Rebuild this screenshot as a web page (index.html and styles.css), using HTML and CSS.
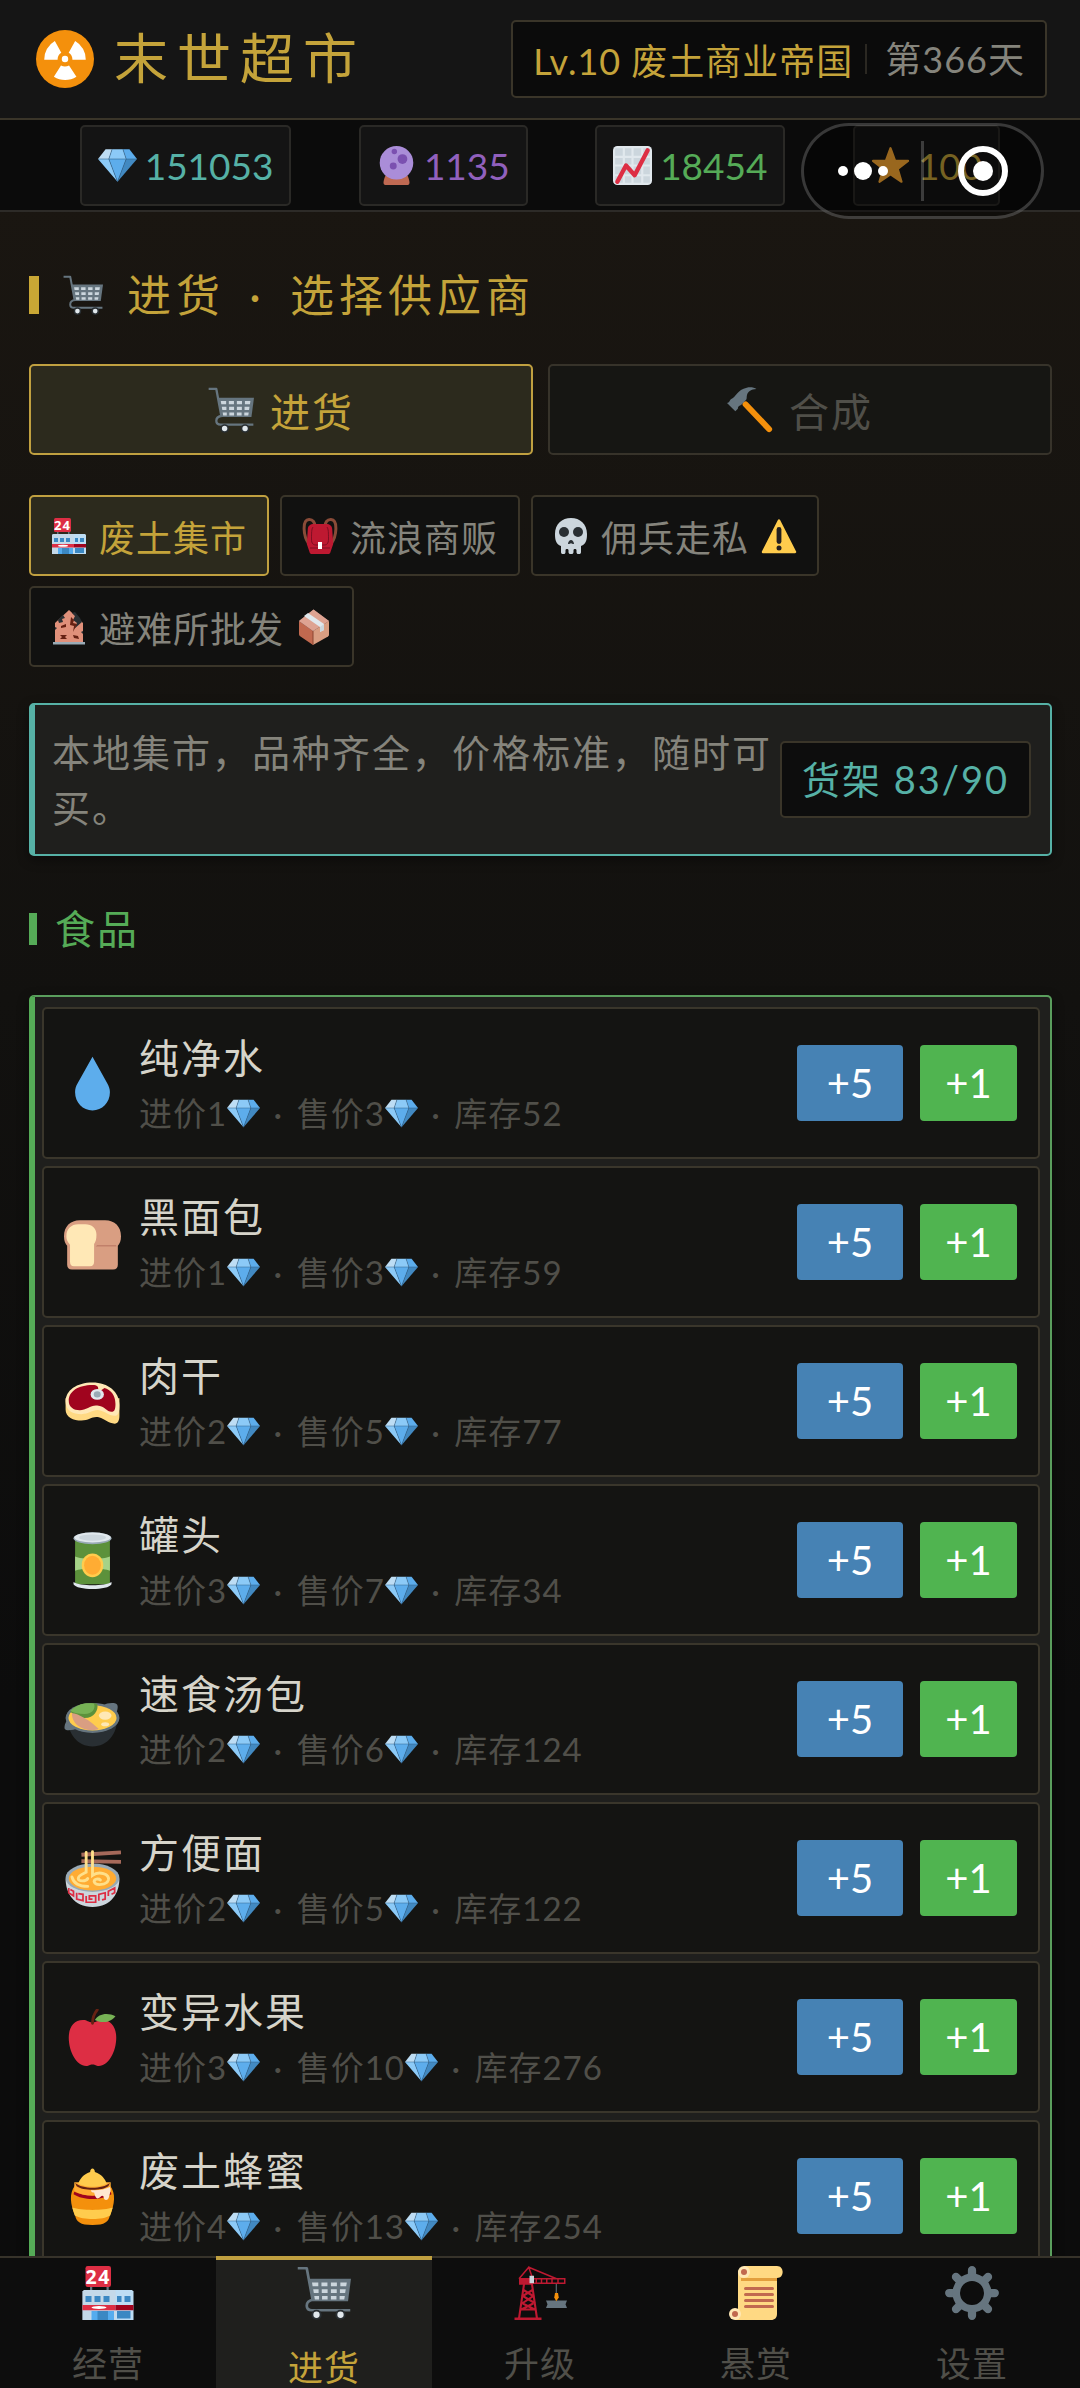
FILE: index.html
```html
<!DOCTYPE html>
<html lang="zh-CN">
<head>
    <meta charset="UTF-8">
    <meta name="viewport" content="width=device-width, initial-scale=1.0">
    <title>末世超市</title>
    <link rel="stylesheet" href="styles.css">
</head>
<body>

<!-- Icon set -->
<svg class="icon-set" aria-hidden="true">
    <symbol id="i-radiation" viewBox="0 0 36 36">
        <circle cx="18" cy="18" r="18" fill="#F4900C"/>
        <circle cx="18" cy="18" r="2" fill="#fff"/>
        <path fill="#fff" d="M13.4 18.5H5.1a12.9 12.9 0 0 1 6.6-11.7l4 7.3a5 5 0 0 0-2.3 4.4zM22.6 18.5h8.3a12.9 12.9 0 0 0-6.6-11.7l-4 7.3a5 5 0 0 1 2.3 4.4zM15.5 22a5 5 0 0 0 5 0l4.6 7a13 13 0 0 1-14 0z"/>
    </symbol>
    <symbol id="i-gem" viewBox="0 0 36 36">
        <path fill="#BDDDF4" d="M13 3H7l-7 9h10z"/>
        <path fill="#5DADEC" d="M36 12l-7-9h-6l3 9z"/>
        <path fill="#4289C1" d="M26 12h10L18 33z"/>
        <path fill="#8CCAF7" d="M10 12H0l18 21zm3-9l-3 9h16l-3-9z"/>
        <path fill="#5DADEC" d="M18 33l-8-21h16z"/>
        <path fill="none" stroke="#2f5d85" stroke-width=".5" d="M0 12h36M13 3l-3 9 8 21 8-21-3-9"/>
    </symbol>
    <symbol id="i-crystal" viewBox="0 0 36 36">
        <path fill="#BF6952" d="M8 27h20c1 2 2 5 2 7 0 1-.6 2-1.600 2H7.600C6.600 36 6 35 6 34c0-2 1-5 2-7z"/>
        <circle cx="18" cy="15.500" r="15.500" fill="#AA8DD8"/>
        <circle cx="16" cy="5" r="2.500" fill="#7B50B0"/>
        <circle cx="23.500" cy="12" r="4.500" fill="#7B50B0"/>
        <circle cx="15" cy="18.500" r="3.200" fill="#7B50B0"/>
    </symbol>
    <symbol id="i-chart" viewBox="0 0 36 36">
        <rect width="36" height="36" rx="4" fill="#E1E8ED"/>
        <path fill="#CCD6DD" d="M2 2h7v7H2zM11 2h6v7h-6zM19 2h7v7h-7zM28 2h6v7h-6zM2 11h7v6H2zM11 11h6v6h-6zM19 11h7v6h-7zM28 11h6v6h-6zM2 19h7v7H2zM11 19h6v7h-6zM19 19h7v7h-7zM28 19h6v7h-6zM2 28h7v6H2zM11 28h6v6h-6zM19 28h7v6h-7zM28 28h6v6h-6z"/>
        <path fill="none" stroke="#DD2E44" stroke-width="4" stroke-linecap="round" stroke-linejoin="round" d="M4 33l8-15 8 9L32 4"/>
    </symbol>
    <symbol id="i-star" viewBox="0 0 36 36">
        <path fill="#FFAC33" stroke="#FFAC33" stroke-width="2" stroke-linejoin="round" d="M18 2l4.200 11.400 12 .4-9.500 7.400L28.200 33 18 26.200 7.800 33l3.500-11.800L1.800 13.800l12-.4z"/>
    </symbol>
    <symbol id="i-cart" viewBox="0 0 36 36">
        <path fill="none" stroke="#66757F" stroke-width="1.800" stroke-linejoin="round" d="M.5 1.500h6L10.500 23M11 22.500c-3 .3-4.500 2-4.500 4s1.500 3 3.500 3h25.500"/>
        <path fill="#66757F" d="M8 8.500h28l-2 15H10.500z"/>
        <path fill="#CCD6DD" d="M10 11h4.200v2.500h-3.800zM16.300 11h4v2.500h-4zM22.600 11h4v2.500h-4zM28.900 11h4.300l-.4 2.500h-3.900zM10.800 15.500h3.600V18h-3.200zM16.500 15.500h3.900V18h-3.900zM22.600 15.500h3.900V18h-3.900zM28.600 15.500h3.900l-.4 2.500h-3.500zM11.500 20h3.200v2.300h-2.800zM16.700 20h3.700v2.300h-3.700zM22.600 20h3.700v2.300h-3.700zM28.400 20h3.500l-.4 2.300h-3.100z"/>
        <circle cx="13" cy="32.500" r="3.400" fill="#292F33"/>
        <circle cx="29" cy="32.500" r="3.400" fill="#292F33"/>
        <circle cx="13" cy="32.500" r="2.100" fill="#E1E8ED"/>
        <circle cx="29" cy="32.500" r="2.100" fill="#E1E8ED"/>
    </symbol>
    <symbol id="i-hammer" viewBox="0 0 36 36">
        <path fill="none" stroke="#F4900C" stroke-width="4.600" stroke-linecap="round" d="M14.500 13.500L33 33"/>
        <path fill="#66757F" d="M0 12.500c2-.5 2-2 3-3C7 8 8 2 15.500.5c3-.6 6 0 7.500 1-4 .2-6.500 2-7.300 4.500-.5 1.700 0 3-.7 4l-4 4c-2 .8-2.500 1.500-2.500 3L6.500 19z"/>
    </symbol>
    <symbol id="i-store" viewBox="0 0 36 36">
        <path fill="#66757F" d="M6 13h1.500v3H6zM17 13h1.500v3H17z"/>
        <rect x="3" y="0" width="17" height="14" rx="1.500" fill="#DD2E44"/>
        <text x="11.500" y="12" text-anchor="middle" class="store-sign">24</text>
        <path fill="#BDDDF4" d="M1 17l1-1h32l1 1v19H1z"/>
        <path fill="#CCD6DD" d="M1 17l1-1h21v20H1z" opacity=".5"/>
        <path fill="#3B88C3" d="M3 20h4v4H3zM9 20h4v4H9zM15 20h4v4h-4zM24 20h3v4h-3zM29 20h4v4h-4zM24 30h9v5h-9z"/>
        <path fill="#DD2E44" d="M1 26h22v3.500H1z"/>
        <path fill="#A0041E" d="M23 26h12v3.500H23z"/>
        <path fill="#55ACEE" d="M7 30h15v6H7z"/>
        <path fill="#3B88C3" d="M11 30h7v6h-7z"/>
        <ellipse cx="12" cy="27.700" rx="5" ry="1" fill="#fff"/>
    </symbol>
    <symbol id="i-backpack" viewBox="0 0 36 36">
        <path fill="none" stroke="#8A4B38" stroke-width="3" d="M7 26C1 18 0 2 7 1.600c4-.2 6 3 6 7M29 26c6-8 7-24 0-24.400-4-.2-6 3-6 7"/>
        <path fill="#BE1931" d="M12 6h12c4 0 6 2 6.200 5l1 15L28.500 34c-.4 1.500-1 2-2.500 2H10c-1.500 0-2.100-.5-2.500-2L4.800 26l1-15C6 8 8 6 12 6z"/>
        <path fill="none" stroke="#7d0f22" stroke-width="1" d="M11 9c-1.500 2-1.500 6-1.500 12 0 5 2 6 4.500 6h8c2.500 0 4.500-1 4.500-6 0-6 0-10-1.500-12M8 30h20"/>
        <rect x="16" y="24" width="4" height="7" fill="#fff"/>
    </symbol>
    <symbol id="i-skull" viewBox="0 0 36 36">
        <path fill="#CCD6DD" d="M34 16C34 6 27 0 18 0S2 6 2 16c0 6 1 10 6 12v6c0 3 4.500 3 4.500 0v-2c0-1.500 3-1.500 3 0v2c0 3 5 3 5 0v-2c0-1.500 3-1.500 3 0v2c0 3 4.500 3 4.500 0v-6c5-2 6-6 6-12z"/>
        <circle cx="11" cy="14" r="5" fill="#292F33"/>
        <circle cx="25" cy="14" r="5" fill="#292F33"/>
        <path fill="#292F33" d="M15 26c0-2 1.500-4 3-4s3 2 3 4c-1 .5-2-.8-3-.8s-2 1.300-3 .8z"/>
    </symbol>
    <symbol id="i-warning" viewBox="0 0 36 36">
        <path fill="#FFCC4D" stroke="#FFCC4D" stroke-width="2.500" stroke-linejoin="round" d="M18 2.500l16 31.500H2z"/>
        <rect x="15.600" y="9" width="4.800" height="17" rx="2.400" fill="#231F20"/>
        <circle cx="18" cy="30" r="2.500" fill="#231F20"/>
    </symbol>
    <symbol id="i-ruin" viewBox="0 0 36 36">
        <path fill="#E0907A" d="M4 33V14L18 1l14 13v19z"/>
        <path fill="#292F33" d="M7 11l5-5 2 3-3 1 1 3-4 1zM21 4l3 3-2 4 4 3-3 6 8-7-2-4-5-6zM4 18l2 1-2 2zM32 22l-2 1 2 2z"/>
        <path fill="#662113" d="M20 8l3 3-1 3 4 1-4 8 1-6-4-1zM10 17l5-2v3l-5 1zM9 26h7l-2 2 2 2H9l2-2zM22 26l5 1 1 3-5-1z"/>
        <path fill="#99AAB5" d="M2 33h32v2.500H2z"/>
    </symbol>
    <symbol id="i-package" viewBox="0 0 36 36">
        <path fill="#C1694F" d="M3 12l14 10v14L4.500 27.500C3.500 27 3 26 3 25z"/>
        <path fill="#D99E82" d="M33 12L17 22v14l15-8.500c.7-.5 1-1 1-2z"/>
        <path fill="#E6AAAA" d="M3 12L17.500.5 33 12 17 22z"/>
        <path fill="#D99E82" d="M3 12L17.500.5 33 12 17 22z" opacity=".6"/>
        <path fill="#E1E8ED" d="M8 7l4-3 16 11v6l-4 2v-5z"/>
        <path fill="#CCD6DD" d="M24 18l4-3v6l-4 2z"/>
        <path fill="none" stroke="#8A4633" stroke-width="1" d="M17 22v14"/>
    </symbol>
    <symbol id="i-water" viewBox="0 0 36 36">
        <path fill="#5DADEC" d="M27.300 17.800L18 1.100 8.700 17.700c-1.200 2.100-1.700 3.600-1.700 5.800C7 30 12 35 18 35s11-5 11-11.500c0-2.200-.6-3.700-1.700-5.700z"/>
    </symbol>
    <symbol id="i-bread" viewBox="0 0 36 36">
        <path fill="#D99E82" d="M36 14c0-6-4-10-10-10H10C4 4 0 8 0 14c0 3 .8 4.500 2 6v12c0 2 1 3 3 3h26c2 0 3-1 3-3V20c1.200-1.500 2-3 2-6z"/>
        <path fill="#FFE8B6" d="M20.500 13c0-4-3-6.500-7-6.500H9c-4.500 0-7.500 3-7.500 7.500 0 3 1.500 4 2.300 5.500V30c0 2 .7 3 2.500 3h10c2 0 2.700-1 2.700-3V19c1-1.500 1.500-3 1.500-6z"/>
        <path fill="#C1806A" d="M21 19.500h12v1H20z"/>
    </symbol>
    <symbol id="i-meat" viewBox="0 0 36 36">
        <path fill="#FFD983" d="M1 16v7c0 5 5 7 10 7s7-3 11-2 6 4 10 4c2 0 3-2 3-5V16z"/>
        <path fill="#FFE8B6" d="M18 6C8 6 1 11 1 18c0 6 5 8 10 8s7-3 11-2.500S28 27 32 27c2.500 0 3-2.500 3-7C35 12 28 6 18 6z"/>
        <path fill="#A0041E" d="M18 7.500c3 0 4 1 3.500 3.500 0 1 2 0 4-1.500 4 1 7 4.500 7 10 0 3-.5 5-2.500 5-3 0-4-3.500-9-4-4-.5-7 3-11 3-4 0-7-2-7-6C3 11.500 9 7.500 18 7.500z"/>
        <ellipse cx="21" cy="13.500" rx="4.200" ry="3.400" fill="#E1E8ED"/>
        <ellipse cx="21" cy="13.500" rx="2.200" ry="1.900" fill="#99AAB5"/>
    </symbol>
    <symbol id="i-can" viewBox="0 0 36 36">
        <path fill="#5C913B" d="M7 5h22v28H7z"/>
        <path fill="#A6D388" d="M7 15.500c4 2 18 2 22 0v9c-4-2-18-2-22 0z"/>
        <ellipse cx="18" cy="4" rx="12" ry="3.800" fill="#99AAB5"/>
        <ellipse cx="18" cy="3.500" rx="11.500" ry="3.200" fill="#E1E8ED"/>
        <ellipse cx="18" cy="3.500" rx="8.500" ry="2" fill="#CCD6DD"/>
        <ellipse cx="18" cy="21" rx="6.800" ry="7.500" fill="#FFCC4D"/>
        <ellipse cx="18" cy="21" rx="5.300" ry="6" fill="#FFAC33"/>
        <path fill="#E1E8ED" d="M6 31.500c4 2.800 20 2.800 24 0v1.500c-2 4-22 4-24 0z"/>
    </symbol>
    <symbol id="i-soup" viewBox="0 0 36 36">
        <path fill="#292F33" d="M2.500 18c0 9 6 17 15.500 17s15.500-8 15.500-17z"/>
        <path fill="#66757F" d="M25 9c2-1.500 7-2 8.500-.5 1 1.500 0 4-.5 6zM2.500 18C.5 20 0 23 .5 24c1 1.500 6 .5 8-.5z"/>
        <ellipse cx="18" cy="17" rx="17" ry="9.500" fill="#66757F"/>
        <ellipse cx="18" cy="17" rx="15.200" ry="8" fill="#FFCC4D"/>
        <path fill="#5C913B" d="M4 13c3-4 9-6 17-5 1 4-2 9-8 9-4 0-7-2-9-4z"/>
        <path fill="#77B255" d="M4 12.500c4-4 9-5.500 15-4.500 1 3-1 6.500-6 6.500-4 0-7-.5-9-2z"/>
        <path fill="#D99E82" d="M5 14c4 0 12 5 17 10-5 2-17 0-17-10z"/>
        <ellipse cx="26" cy="15.500" rx="4" ry="2.600" fill="#FFE8B6"/>
        <ellipse cx="26" cy="21" rx="2.500" ry="1.300" fill="#FFE8B6"/>
    </symbol>
    <symbol id="i-noodle" viewBox="0 0 36 36">
        <path fill="#CCD6DD" d="M1 18c0 9 5 18 17 18s17-9 17-18z"/>
        <ellipse cx="18" cy="17.500" rx="17" ry="9" fill="#99AAB5"/>
        <ellipse cx="18" cy="18" rx="15" ry="7.500" fill="#FFAC33"/>
        <path fill="none" stroke="#A5695A" stroke-width="2.400" d="M11 3L36 1.500M11 7l25 .5"/>
        <path fill="none" stroke="#FFE08A" stroke-width="1.800" stroke-linecap="round" d="M14 1.500V14c-2 1-5 2-5 4s5 2 6 0M18 1v15c4-3 11-1 10 3-1 3-8 4-9 1 0-2 3-2 4-1M5 17c1 4 5 6 10 6"/>
        <path fill="none" stroke="#DD2E44" stroke-width="1.100" d="M3 24v3l3 2v-3l-2-1M8 27v4l4 1v-4l-3-.5M14 29v4h6v-4h-4v2h2M22 32v-4l4-1v4l-2 .5M28 29v-3l4-2v3l-2 1"/>
    </symbol>
    <symbol id="i-apple" viewBox="0 0 36 36">
        <path fill="#DD2E44" d="M24 7c-3 0-3 1.500-6 1.500S15 7 12 7C6 7 3 12 3 18c0 9 5 18 11 18 2 0 2-1 4-1s2 1 4 1c6 0 11-9 11-18 0-6-3-11-9-11z"/>
        <path fill="none" stroke="#662113" stroke-width="1.800" stroke-linecap="round" d="M18 9c0-3 1-6 3-8.500"/>
        <path fill="#77B255" d="M19.500 7c2-4 8-5 13-2.500C29 9 23 9 19.500 7z"/>
    </symbol>
    <symbol id="i-honey" viewBox="0 0 36 36">
        <path fill="#F4900C" d="M7 11C3 16 4 23 7 30c1 4 3 6 11 6s10-2 11-6c3-7 4-14 0-19z"/>
        <path fill="#FFCC4D" d="M5.200 25c6 2 19.600 2 25.600 0l-1.600 5c-5 3-17 3-22.400 0z"/>
        <path fill="#A0041E" d="M6.500 15c6 3 17 3 23 0l.5 1.500c-6 4-18 4-24 0z"/>
        <path fill="#FFAC33" d="M6.500 9h23v5.500c-6 4-17 4-23 0z"/>
        <path fill="#662113" d="M7 9.500c5 4 17 4 22 0l-1 2c-4 3-16 3-20 0z"/>
        <path fill="#FFCC4D" d="M9 10c1-3 3-6 7.500-7.500 0-3 3-3 3 0C24 4 26 7 27 10c-5 2.500-13 2.500-18 0z"/>
        <path fill="#FFE8D0" d="M17 14c4 .5 9-.5 12-2 1 2 0 4-.5 6-.5 3-3.500 3-3.500 0-1-1.500-2 .5-3 1-2 1-2.500-2-3-3.500-1 0-2-.5-2-1.500z"/>
    </symbol>
    <symbol id="i-crane" viewBox="0 0 36 36">
        <path fill="none" stroke="#BE1931" stroke-width="1.400" d="M7.500 11L4 35M12.500 11L16 35M7 16l6.500 4L6 25M13 16l-6.500 4 8.500 5M5.500 29l8-4M14.500 29l-8-4M4.500 29h11"/>
        <path fill="#BE1931" d="M1 34.300h18V36H1zM4 8h8v4.500H4z"/>
        <path fill="none" stroke="#BE1931" stroke-width="1" d="M12 8.500h22.500v3H12zM15.500 8.500v3M19 8.500v3M22.500 8.500v3M26 8.500v3M30 8.500v3M4 8.500L10.500.8 13 8M10.500.8L29 8.500"/>
        <path fill="#CCD6DD" d="M11 6.500h3v5h-3z"/>
        <path fill="#66757F" d="M28.500 12h.7v7h-.7zM22 23h14l-1 2.500 1 2.500H22l1-2.500z"/>
        <path fill="#F4900C" d="M28 18h2l.5 3-1.700 2.500L27.500 21z"/>
    </symbol>
    <symbol id="i-scroll" viewBox="0 0 36 36">
        <path fill="#FFD983" d="M6 3h26v29c0 2.500-1.500 4-4 4H4V29h2z"/>
        <path fill="#E39F3D" d="M8 8h24v2H8z"/>
        <path fill="#FFD983" d="M10 0h22c5 0 5 8 0 8H10z"/>
        <circle cx="10" cy="4" r="4" fill="#FFE8B6"/>
        <circle cx="10" cy="4" r="2" fill="#C1694F"/>
        <circle cx="4" cy="32" r="4" fill="#FFE8B6"/>
        <circle cx="4" cy="32" r="2" fill="#C1694F"/>
        <path stroke="#C1694F" stroke-width="2" stroke-linecap="round" d="M11 15h18M11 19h18M11 23h18M11 27h18"/>
    </symbol>
    <symbol id="i-gear" viewBox="0 0 36 36">
        <path stroke="#66757F" stroke-width="5.500" stroke-linecap="round" d="M18 2.800v4M18 29.200v4M2.800 18h4M29.200 18h4M7.300 7.300l2 2M26.700 26.700l2 2M7.300 28.700l2-2M26.700 9.300l2-2"/>
        <circle cx="18" cy="18" r="10.500" fill="none" stroke="#66757F" stroke-width="5"/>
    </symbol>
</svg>

<header class="header">
    <h1 class="title">
        <svg class="icon"><use href="#i-radiation"/></svg>
        末世超市
    </h1>
    <div class="level">
        <span class="level-name">Lv.10 废土商业帝国</span>
        <span class="level-day">第366天</span>
    </div>
</header>

<div class="resources">
    <div class="resource teal"><svg class="icon"><use href="#i-gem"/></svg>151053</div>
    <div class="resource purple"><svg class="icon"><use href="#i-crystal"/></svg>1135</div>
    <div class="resource green"><svg class="icon"><use href="#i-chart"/></svg>18454</div>
    <div class="resource gold"><svg class="icon"><use href="#i-star"/></svg>100</div>
</div>

<!-- Floating menu capsule -->
<div class="capsule">
    <button type="button" aria-label="更多">
        <svg width="50" height="20" viewBox="0 0 50 20" fill="#fff"><circle cx="5" cy="10" r="5"/><circle cx="25" cy="10" r="9"/><circle cx="45" cy="10" r="5"/></svg>
    </button>
    <button type="button" aria-label="关闭">
        <svg width="50" height="50" viewBox="0 0 50 50"><circle cx="25" cy="25" r="22" fill="none" stroke="#fff" stroke-width="6"/><circle cx="25" cy="25" r="10" fill="#fff"/></svg>
    </button>
</div>

<main class="content">
    <h2 class="section-title"><svg class="icon"><use href="#i-cart"/></svg><span>进货 <span class="dot">·</span> 选择供应商</span></h2>

    <div class="tabs">
        <button type="button" class="tab active"><svg class="icon"><use href="#i-cart"/></svg>进货</button>
        <button type="button" class="tab"><svg class="icon"><use href="#i-hammer"/></svg>合成</button>
    </div>

    <div class="suppliers">
        <button type="button" class="supplier active"><svg class="icon"><use href="#i-store"/></svg>废土集市</button>
        <button type="button" class="supplier"><svg class="icon"><use href="#i-backpack"/></svg>流浪商贩</button>
        <button type="button" class="supplier"><svg class="icon"><use href="#i-skull"/></svg>佣兵走私<svg class="icon"><use href="#i-warning"/></svg></button>
        <button type="button" class="supplier"><svg class="icon"><use href="#i-ruin"/></svg>避难所批发<svg class="icon"><use href="#i-package"/></svg></button>
    </div>

    <div class="info">
        <p>本地集市，品种齐全，价格标准，随时可买。</p>
        <span class="shelf">货架 83/90</span>
    </div>

    <h3 class="category">食品</h3>

    <div class="goods">
        <div class="item">
            <svg class="icon"><use href="#i-water"/></svg>
            <div class="item-text">
                <div class="item-name">纯净水</div>
                <div class="item-meta">进价1<svg class="icon"><use href="#i-gem"/></svg> <span class="dot">·</span> 售价3<svg class="icon"><use href="#i-gem"/></svg> <span class="dot">·</span> 库存52</div>
            </div>
            <button type="button" class="buy buy-five">+5</button>
            <button type="button" class="buy buy-one">+1</button>
        </div>
        <div class="item">
            <svg class="icon"><use href="#i-bread"/></svg>
            <div class="item-text">
                <div class="item-name">黑面包</div>
                <div class="item-meta">进价1<svg class="icon"><use href="#i-gem"/></svg> <span class="dot">·</span> 售价3<svg class="icon"><use href="#i-gem"/></svg> <span class="dot">·</span> 库存59</div>
            </div>
            <button type="button" class="buy buy-five">+5</button>
            <button type="button" class="buy buy-one">+1</button>
        </div>
        <div class="item">
            <svg class="icon"><use href="#i-meat"/></svg>
            <div class="item-text">
                <div class="item-name">肉干</div>
                <div class="item-meta">进价2<svg class="icon"><use href="#i-gem"/></svg> <span class="dot">·</span> 售价5<svg class="icon"><use href="#i-gem"/></svg> <span class="dot">·</span> 库存77</div>
            </div>
            <button type="button" class="buy buy-five">+5</button>
            <button type="button" class="buy buy-one">+1</button>
        </div>
        <div class="item">
            <svg class="icon"><use href="#i-can"/></svg>
            <div class="item-text">
                <div class="item-name">罐头</div>
                <div class="item-meta">进价3<svg class="icon"><use href="#i-gem"/></svg> <span class="dot">·</span> 售价7<svg class="icon"><use href="#i-gem"/></svg> <span class="dot">·</span> 库存34</div>
            </div>
            <button type="button" class="buy buy-five">+5</button>
            <button type="button" class="buy buy-one">+1</button>
        </div>
        <div class="item">
            <svg class="icon"><use href="#i-soup"/></svg>
            <div class="item-text">
                <div class="item-name">速食汤包</div>
                <div class="item-meta">进价2<svg class="icon"><use href="#i-gem"/></svg> <span class="dot">·</span> 售价6<svg class="icon"><use href="#i-gem"/></svg> <span class="dot">·</span> 库存124</div>
            </div>
            <button type="button" class="buy buy-five">+5</button>
            <button type="button" class="buy buy-one">+1</button>
        </div>
        <div class="item">
            <svg class="icon"><use href="#i-noodle"/></svg>
            <div class="item-text">
                <div class="item-name">方便面</div>
                <div class="item-meta">进价2<svg class="icon"><use href="#i-gem"/></svg> <span class="dot">·</span> 售价5<svg class="icon"><use href="#i-gem"/></svg> <span class="dot">·</span> 库存122</div>
            </div>
            <button type="button" class="buy buy-five">+5</button>
            <button type="button" class="buy buy-one">+1</button>
        </div>
        <div class="item">
            <svg class="icon"><use href="#i-apple"/></svg>
            <div class="item-text">
                <div class="item-name">变异水果</div>
                <div class="item-meta">进价3<svg class="icon"><use href="#i-gem"/></svg> <span class="dot">·</span> 售价10<svg class="icon"><use href="#i-gem"/></svg> <span class="dot">·</span> 库存276</div>
            </div>
            <button type="button" class="buy buy-five">+5</button>
            <button type="button" class="buy buy-one">+1</button>
        </div>
        <div class="item">
            <svg class="icon"><use href="#i-honey"/></svg>
            <div class="item-text">
                <div class="item-name">废土蜂蜜</div>
                <div class="item-meta">进价4<svg class="icon"><use href="#i-gem"/></svg> <span class="dot">·</span> 售价13<svg class="icon"><use href="#i-gem"/></svg> <span class="dot">·</span> 库存254</div>
            </div>
            <button type="button" class="buy buy-five">+5</button>
            <button type="button" class="buy buy-one">+1</button>
        </div>
    </div>
</main>

<nav class="nav">
    <a href="#manage"><svg class="icon"><use href="#i-store"/></svg>经营</a>
    <a href="#stock" class="active"><svg class="icon"><use href="#i-cart"/></svg>进货</a>
    <a href="#upgrade"><svg class="icon"><use href="#i-crane"/></svg>升级</a>
    <a href="#bounty"><svg class="icon"><use href="#i-scroll"/></svg>悬赏</a>
    <a href="#settings"><svg class="icon"><use href="#i-gear"/></svg>设置</a>
</nav>

</body>
</html>
```

FILE: styles.css
```css
* {
    box-sizing: border-box;
}
body {
    margin: 0;
    height: 100vh;
    display: flex;
    flex-direction: column;
    font-family: Lato, "Noto Sans CJK SC", sans-serif;
    font-weight: 400;
    color: #d6d4ca;
    background: linear-gradient(#1a1611 200px, #12110f 1000px, #0c0c0c 1700px);
}
h1, h2, h3, p {
    margin: 0;
    font-weight: 400;
}
button {
    font-family: inherit;
    font-weight: inherit;
    padding: 0;
    border: none;
    cursor: pointer;
}
.icon-set {
    display: none;
}
.icon {
    flex: none;
    width: 36px;
    height: 36px;
}
.dot {
    margin: 0 4px;
}
.store-sign {
    font-family: "Open Sans", sans-serif;
    font-size: 13px;
    font-weight: 700;
    fill: #fff;
}

/* Header */
.header {
    flex: none;
    height: 120px;
    display: flex;
    align-items: center;
    justify-content: space-between;
    padding: 0 33px 0 36px;
    background-color: #151515;
    border-bottom: 2px solid #3a3529;
}
.title {
    display: flex;
    align-items: center;
    gap: 20px;
    font-size: 54px;
    line-height: 80px;
    letter-spacing: 9px;
    color: #c4a33a;
}
.title .icon {
    width: 58px;
    height: 58px;
}
.level {
    display: flex;
    align-items: center;
    height: 78px;
    padding: 0 20px;
    font-size: 36px;
    letter-spacing: 1px;
    background-color: #0b0b0b;
    border: 2px solid #3a3529;
    border-radius: 5px;
}
.level-name {
    color: #c4a33a;
}
.level-day {
    margin-left: 12px;
    padding-left: 18px;
    line-height: 30px;
    color: #85847c;
    border-left: 2px solid #2b2822;
}

/* Resources */
.resources {
    flex: none;
    height: 92px;
    display: flex;
    align-items: center;
    justify-content: space-around;
    padding: 0 46px;
    background-color: #0b0b0b;
    border-bottom: 2px solid #2d2b28;
}
.resource {
    display: flex;
    align-items: center;
    gap: 8px;
    height: 81px;
    padding: 0 16px;
    font-size: 37px;
    background-color: #141414;
    border: 2px solid #2a2926;
    border-radius: 5px;
}
.resource .icon {
    width: 39px;
    height: 39px;
}
.teal {
    color: #56b1a6;
}
.purple {
    color: #9160bd;
}
.green {
    color: #55ab57;
}
.gold {
    color: #c4a33a;
}

.capsule {
    position: fixed;
    top: 123px;
    right: 36px;
    width: 243px;
    height: 96px;
    display: flex;
    align-items: center;
    background-color: rgba(0, 0, 0, 0.4);
    border: 3px solid rgba(255, 255, 255, 0.2);
    border-radius: 48px;
}
.capsule button {
    flex: 1;
    height: 60px;
    display: flex;
    align-items: center;
    justify-content: center;
    background: none;
}
.capsule button + button {
    border-left: 3px solid rgba(255, 255, 255, 0.2);
}

/* Stock page */
.content {
    flex: 1;
    min-height: 0;
    overflow-y: auto;
    scrollbar-width: none;
    padding: 51px 28px 0 29px;
}
.section-title {
    display: flex;
    align-items: center;
    gap: 24px;
    font-size: 44px;
    line-height: 64px;
    letter-spacing: 5px;
    color: #c4a33a;
}
.section-title::before {
    content: "";
    width: 10px;
    height: 38px;
    background-color: #c9a735;
}
.section-title .icon {
    width: 40px;
    height: 40px;
}
.section-title .dot {
    margin: 0 8px;
}
.tabs {
    display: flex;
    gap: 15px;
    margin-top: 37px;
}
.tab {
    flex: 1;
    height: 91px;
    display: flex;
    align-items: center;
    justify-content: center;
    gap: 16px;
    font-size: 40px;
    letter-spacing: 2px;
    color: #504f49;
    background-color: #161613;
    border: 2px solid #37332a;
    border-radius: 5px;
}
.tab .icon {
    width: 46px;
    height: 46px;
}
.suppliers {
    display: flex;
    flex-wrap: wrap;
    gap: 10px 11px;
    margin-top: 40px;
}
.supplier {
    height: 81px;
    display: flex;
    align-items: center;
    gap: 12px;
    padding: 0 20px;
    font-size: 36px;
    letter-spacing: 1px;
    color: #85847c;
    background-color: #111110;
    border: 2px solid #3a3529;
    border-radius: 5px;
}
.tab.active,
.supplier.active {
    color: #c4a33a;
    background-color: #2c2a1d;
    border-color: #c0a040;
}
.info {
    display: flex;
    align-items: center;
    justify-content: space-between;
    min-height: 153px;
    margin-top: 36px;
    padding: 0 19px 0 17px;
    background-color: #1f1f1d;
    border: 2px solid #56b1a6;
    border-left-width: 6px;
    border-radius: 5px;
    box-shadow: 0 4px 12px rgba(0, 0, 0, 0.4);
}
.info p {
    flex: 1;
    font-size: 38px;
    line-height: 55px;
    letter-spacing: 2px;
    color: #85847c;
}
.shelf {
    flex: none;
    padding: 0 20px;
    font-size: 38px;
    line-height: 73px;
    letter-spacing: 2px;
    color: #56b1a6;
    background-color: #0d0d0d;
    border: 2px solid #3a3529;
    border-radius: 5px;
}
.category {
    display: flex;
    align-items: center;
    gap: 18px;
    margin-top: 43px;
    font-size: 40px;
    line-height: 60px;
    letter-spacing: 2px;
    color: #55ab57;
}
.category::before {
    content: "";
    width: 8px;
    height: 32px;
    background-color: #55ab57;
}
.goods {
    display: flex;
    flex-direction: column;
    gap: 7px;
    margin-top: 36px;
    padding: 10px 10px 10px 7px;
    background-color: #1f1f1d;
    border: 2px solid #5a9e5d;
    border-left: 6px solid #55ab57;
    border-radius: 5px;
    box-shadow: 0 4px 12px rgba(0, 0, 0, 0.4);
}
.item {
    display: flex;
    align-items: center;
    height: 152px;
    padding: 0 21px 0 20px;
    background-color: #141412;
    border: 2px solid #3a362b;
    border-radius: 5px;
}
.item > .icon {
    width: 57px;
    height: 57px;
}
.item-text {
    flex: 1;
    margin-left: 18px;
}
.item-name {
    font-size: 40px;
    line-height: 60px;
    letter-spacing: 2px;
}
.item-meta {
    font-size: 33px;
    line-height: 50px;
    letter-spacing: 1px;
    color: #504f49;
}
.item-meta .icon {
    width: 33px;
    height: 33px;
    vertical-align: -4px;
}
.buy {
    height: 76px;
    font-size: 40px;
    color: #fff;
    border-radius: 4px;
}
.buy-five {
    width: 106px;
    background-color: #4682b4;
}
.buy-one {
    width: 97px;
    margin-left: 17px;
    background-color: #50b450;
}

/* Bottom navigation */
.nav {
    flex: none;
    height: 132px;
    display: flex;
    background-color: #0d0d0d;
    border-top: 2px solid #37332a;
}
.nav a {
    flex: 1;
    display: flex;
    flex-direction: column;
    align-items: center;
    gap: 24px;
    padding-top: 8px;
    font-size: 35px;
    line-height: 38px;
    letter-spacing: 1px;
    text-decoration: none;
    color: #504f49;
}
.nav .icon {
    width: 54px;
    height: 54px;
}
.nav .active {
    margin-top: -2px;
    padding-top: 6px;
    gap: 28px;
    color: #c4a33a;
    background-color: #1f1f1d;
    border-top: 4px solid #c0a040;
}
```
